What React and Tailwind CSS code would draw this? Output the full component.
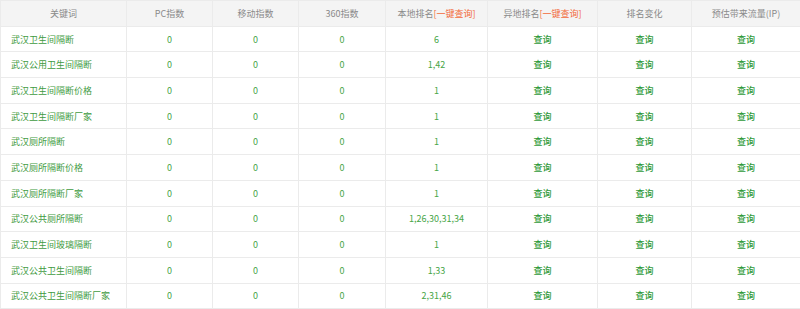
const rows = [
  ['武汉卫生间隔断', '6'],
  ['武汉公用卫生间隔断', '1,42'],
  ['武汉卫生间隔断价格', '1'],
  ['武汉卫生间隔断厂家', '1'],
  ['武汉厕所隔断', '1'],
  ['武汉厕所隔断价格', '1'],
  ['武汉厕所隔断厂家', '1'],
  ['武汉公共厕所隔断', '1,26,30,31,34'],
  ['武汉卫生间玻璃隔断', '1'],
  ['武汉公共卫生间隔断', '1,33'],
  ['武汉公共卫生间隔断厂家', '2,31,46'],
];

const widths = ['w-[126px]', 'w-[86px]', 'w-[86px]', 'w-[87px]', 'w-[102px]', 'w-[110px]', 'w-[94px]', 'w-[109px]'];

export default function App() {
  const cell = 'border border-[#ebebeb] p-0 h-[25.7px] text-center';
  return (
    <div className="w-[800px] bg-white" style={{ fontFamily: '"Noto Sans CJK SC", "Liberation Sans", sans-serif' }}>
      <table className="w-[800px] table-fixed border-collapse text-[9px] leading-none">
        <thead>
          <tr className="bg-[#f4f4f4] text-[#8a8a8a]">
            <th className={`${cell} ${widths[0]} font-normal`}>关键词</th>
            <th className={`${cell} ${widths[1]} font-normal`}>PC指数</th>
            <th className={`${cell} ${widths[2]} font-normal`}>移动指数</th>
            <th className={`${cell} ${widths[3]} font-normal`}>360指数</th>
            <th className={`${cell} ${widths[4]} font-normal`}>
              本地排名<span className="text-[#f26a3c]">[一键查询]</span>
            </th>
            <th className={`${cell} ${widths[5]} font-normal`}>
              异地排名<span className="text-[#f26a3c]">[一键查询]</span>
            </th>
            <th className={`${cell} ${widths[6]} font-normal`}>排名变化</th>
            <th className={`${cell} ${widths[7]} font-normal`}>预估带来流量(IP)</th>
          </tr>
        </thead>
        <tbody>
          {rows.map(([kw, rank], i) => (
            <tr key={i}>
              <td className={`${cell} !text-left pl-[10px] text-[#3f9b3f]`}>{kw}</td>
              <td className={`${cell} text-[#46a546]`}>0</td>
              <td className={`${cell} text-[#46a546]`}>0</td>
              <td className={`${cell} text-[#46a546]`}>0</td>
              <td className={`${cell} text-[#46a546]`}>{rank}</td>
              <td className={`${cell} text-[#2f9a3a] font-medium`}>查询</td>
              <td className={`${cell} text-[#2f9a3a] font-medium`}>查询</td>
              <td className={`${cell} text-[#2f9a3a] font-medium`}>查询</td>
            </tr>
          ))}
        </tbody>
      </table>
    </div>
  );
}
